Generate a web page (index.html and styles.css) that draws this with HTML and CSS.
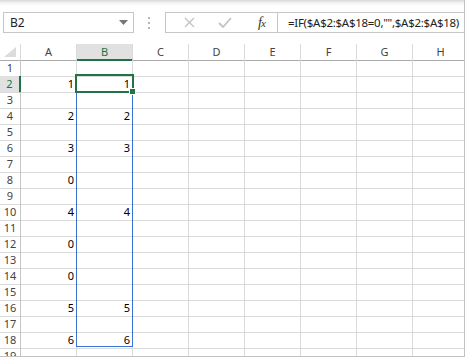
FILE: index.html
```html
<!DOCTYPE html>
<html lang="en">
<head>
    <meta charset="UTF-8">
    <title>Sheet</title>
    <link rel="stylesheet" href="styles.css">
</head>
<body>
<div class="app">
    <div class="formula-bar">
        <div class="name-box">
            <span>B2</span>
            <svg class="drop" width="9" height="5" viewBox="0 0 9 5"><path d="M0 0H9L4.5 5Z" fill="#777"/></svg>
        </div>
        <div class="grip">
            <svg width="3" height="12" viewBox="0 0 3 12"><rect x="0" y="0" width="2" height="2" fill="#b5b5b5"/><rect x="0" y="5" width="2" height="2" fill="#b5b5b5"/><rect x="0" y="10" width="2" height="2" fill="#b5b5b5"/></svg>
        </div>
        <div class="fx-box">
            <svg class="cancel" width="11" height="11" viewBox="0 0 11 11"><path d="M1 1L10 10M10 1L1 10" stroke="#c3c3c3" stroke-width="1.4" fill="none"/></svg>
            <svg class="enter" width="14" height="11" viewBox="0 0 14 11"><path d="M1 6L5 10L13 1" stroke="#c3c3c3" stroke-width="1.8" fill="none"/></svg>
            <span class="fx">f<small>x</small></span>
        </div>
        <div class="formula">=IF($A$2:$A$18=0,"",$A$2:$A$18)</div>
    </div>

    <div class="sheet">
        <div class="row head">
            <div class="corner"><svg width="13" height="11" viewBox="0 0 13 11"><path d="M12 0V10H0Z" fill="#dcdcdc"/></svg></div>
            <div>A</div><div class="sel-col">B</div><div>C</div><div>D</div><div>E</div><div>F</div><div>G</div><div>H</div>
        </div>
        <div class="row"><div class="num">1</div><div></div><div></div><div></div><div></div><div></div><div></div><div></div><div></div></div>
        <div class="row"><div class="num sel-row">2</div><div>1</div><div>1</div><div></div><div></div><div></div><div></div><div></div><div></div></div>
        <div class="row"><div class="num">3</div><div></div><div></div><div></div><div></div><div></div><div></div><div></div><div></div></div>
        <div class="row"><div class="num">4</div><div>2</div><div>2</div><div></div><div></div><div></div><div></div><div></div><div></div></div>
        <div class="row"><div class="num">5</div><div></div><div></div><div></div><div></div><div></div><div></div><div></div><div></div></div>
        <div class="row"><div class="num">6</div><div>3</div><div>3</div><div></div><div></div><div></div><div></div><div></div><div></div></div>
        <div class="row"><div class="num">7</div><div></div><div></div><div></div><div></div><div></div><div></div><div></div><div></div></div>
        <div class="row"><div class="num">8</div><div>0</div><div></div><div></div><div></div><div></div><div></div><div></div><div></div></div>
        <div class="row"><div class="num">9</div><div></div><div></div><div></div><div></div><div></div><div></div><div></div><div></div></div>
        <div class="row"><div class="num">10</div><div>4</div><div>4</div><div></div><div></div><div></div><div></div><div></div><div></div></div>
        <div class="row"><div class="num">11</div><div></div><div></div><div></div><div></div><div></div><div></div><div></div><div></div></div>
        <div class="row"><div class="num">12</div><div>0</div><div></div><div></div><div></div><div></div><div></div><div></div><div></div></div>
        <div class="row"><div class="num">13</div><div></div><div></div><div></div><div></div><div></div><div></div><div></div><div></div></div>
        <div class="row"><div class="num">14</div><div>0</div><div></div><div></div><div></div><div></div><div></div><div></div><div></div></div>
        <div class="row"><div class="num">15</div><div></div><div></div><div></div><div></div><div></div><div></div><div></div><div></div></div>
        <div class="row"><div class="num">16</div><div>5</div><div>5</div><div></div><div></div><div></div><div></div><div></div><div></div></div>
        <div class="row"><div class="num">17</div><div></div><div></div><div></div><div></div><div></div><div></div><div></div><div></div></div>
        <div class="row"><div class="num">18</div><div>6</div><div>6</div><div></div><div></div><div></div><div></div><div></div><div></div></div>
        <div class="row"><div class="num">19</div><div></div><div></div><div></div><div></div><div></div><div></div><div></div><div></div></div>

        <div class="range"></div>
        <div class="selection"></div>
        <div class="handle"></div>
    </div>
</div>
</body>
</html>
```

FILE: styles.css
```css
body {
    margin: 0;
    padding: 0;
    background: #fff;
    font-family: "Noto Sans", "Open Sans", sans-serif;
}

.app {
    width: 465px;
    height: 357px;
    box-sizing: border-box;
    border-right: 1px solid #c2c2c2;
    border-bottom: 1px solid #c2c2c2;
    overflow: hidden;
    background: #fff;
}

/* formula bar */
.formula-bar {
    height: 44px;
    box-sizing: border-box;
    padding-top: 12px;
    display: flex;
    align-items: flex-start;
    background: linear-gradient(#d9d9d9 0, #f4f4f4 3px, #fff 6px);
}

.name-box {
    margin-left: 3px;
    width: 131px;
    height: 21px;
    box-sizing: border-box;
    border: 1px solid #c6c6c6;
    display: flex;
    align-items: center;
    justify-content: space-between;
    padding: 0 5px 0 6px;
    font-size: 12px;
    color: #222;
}

.grip {
    width: 31px;
    height: 21px;
    display: flex;
    align-items: center;
    justify-content: center;
}

.fx-box {
    width: 113px;
    height: 21px;
    box-sizing: border-box;
    border: 1px solid #c6c6c6;
    display: flex;
    align-items: center;
    position: relative;
}

.fx-box .cancel {
    margin-left: 18px;
}

.fx-box .enter {
    margin-left: 23px;
}

.fx {
    margin-left: 26px;
    font-family: "Liberation Serif", serif;
    font-style: italic;
    font-size: 14px;
    color: #333;
    letter-spacing: -1px;
}

.fx small {
    font-size: 11px;
}

.formula {
    flex: 1;
    height: 21px;
    box-sizing: border-box;
    border: 1px solid #c6c6c6;
    border-left: none;
    margin-right: -4px;
    padding-left: 10px;
    font-size: 11.5px;
    letter-spacing: -0.28px;
    line-height: 19px;
    color: #222;
    white-space: nowrap;
}

/* grid */
.sheet {
    position: relative;
    font-size: 11px;
}

.row {
    display: grid;
    grid-template-columns: 21px repeat(8, 56px);
    height: 16px;
}

.row > div {
    box-sizing: border-box;
    border-right: 1px solid #dadada;
    border-bottom: 1px solid #dadada;
    text-align: right;
    padding-right: 2px;
    line-height: 16px;
    color: #000;
}

.row.head > div {
    text-align: center;
    padding-right: 0;
    color: #444;
    line-height: 15px;
    border-bottom-color: #ababab;
}

.row.head .corner {
    display: flex;
    align-items: flex-end;
    justify-content: flex-end;
    padding: 0 3px 2px 0;
}

.row.head .sel-col {
    background: #e1e1e1;
    color: #217346;
    border-bottom: 2px solid #217346;
}

.row > .num {
    text-align: center;
    padding-right: 0;
    color: #444;
    border-right-color: #c6c6c6;
}

.row > .sel-row {
    background: #e1e1e1;
    color: #217346;
    border-right: 2px solid #217346;
}

.range {
    position: absolute;
    left: 76px;
    top: 31px;
    width: 57px;
    height: 272px;
    box-sizing: border-box;
    border: 1px solid #3a72cf;
}

.selection {
    position: absolute;
    left: 75px;
    top: 30px;
    width: 59px;
    height: 19px;
    box-sizing: border-box;
    border: 2px solid #217346;
}

.handle {
    position: absolute;
    left: 129px;
    top: 44px;
    width: 7px;
    height: 7px;
    box-sizing: border-box;
    background: #217346;
    border: 1px solid #fff;
}
```
